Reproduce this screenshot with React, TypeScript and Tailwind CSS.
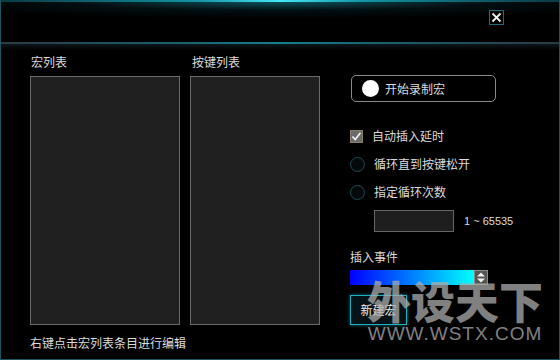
import React from "react";

const cjk = { fontFamily: '"Noto Sans CJK SC", "Noto Sans", sans-serif' };

function Radio() {
  return <div className="w-[15px] h-[15px] rounded-full border-[1.5px] border-[#1d4b56] bg-[#05090b] shrink-0" />;
}

export default function App() {
  return (
    <div
      className="relative w-[560px] h-[360px] bg-black border-x border-b border-[#1b5560] overflow-hidden text-[#dcdcdc] text-[12px]"
      style={cjk}
    >
      {/* header */}
      <div className="relative h-[42px] bg-[radial-gradient(ellipse_70%_45%_at_50%_0%,rgba(24,170,190,0.55),rgba(8,60,70,0.25)_55%,rgba(0,0,0,0)_100%)]">
        <div className="absolute left-0 right-0 top-0 h-[2px] bg-[linear-gradient(90deg,#0b3a44,#1592a3_35%,#45e6f5_50%,#1592a3_65%,#0b3a44)]" />
        <div className="flex justify-end pt-[10px] pr-[55px]">
          <div className="w-[15px] h-[15px] border border-[#1a6e7c] bg-black flex items-center justify-center">
            <svg width="11" height="11" viewBox="0 0 11 11">
              <path d="M1.5 1.5 L9.5 9.5 M9.5 1.5 L1.5 9.5" stroke="#f0f0f0" strokeWidth="1.8" />
            </svg>
          </div>
        </div>
      </div>
      <div className="h-[2px] bg-[linear-gradient(90deg,#2a3a42,#1a5f6a_30%,#13808c_50%,#1a5f6a_70%,#2a3a42)]" />
      <div className="h-[6px] bg-[linear-gradient(180deg,#0e171b,#000)]" />

      {/* body */}
      <div className="flex pl-[29px] -mt-[6px]">
        <div className="flex flex-col">
          <div className="flex gap-[10px]">
            <div className="flex flex-col w-[150px]">
              <div className="pt-[10px] leading-[16px] pl-[1px]">宏列表</div>
              <div className="mt-[6px] h-[249px] bg-[#202020] border border-[#6a6a6a]" />
            </div>
            <div className="flex flex-col w-[130px]">
              <div className="pt-[10px] leading-[16px] pl-[2px]">按键列表</div>
              <div className="mt-[6px] h-[249px] bg-[#202020] border border-[#6a6a6a]" />
            </div>
          </div>
          <div className="mt-[10px] leading-[16px]">右键点击宏列表条目进行编辑</div>
        </div>

        <div className="ml-[30px] flex flex-col">
          <div className="mt-[31px] ml-[1px] w-[145px] h-[27px] border border-[#8a8a8a] rounded-[5px] flex items-center pl-[10px]">
            <div className="w-[17px] h-[17px] rounded-full bg-white shrink-0" />
            <span className="ml-[6px] leading-[16px]">开始录制宏</span>
          </div>

          <div className="mt-[26px] h-[16px] flex items-center">
            <div className="w-[13px] h-[13px] bg-[#6a6a6a] border border-[#8c7e6c] flex items-center justify-center shrink-0">
              <svg width="11" height="11" viewBox="0 0 11 11">
                <path d="M1.5 5.5 L4.2 8.5 L9.5 1.8" stroke="#f4f4f4" strokeWidth="1.6" fill="none" />
              </svg>
            </div>
            <span className="ml-[9px]">自动插入延时</span>
          </div>

          <div className="mt-[12px] h-[16px] flex items-center">
            <Radio />
            <span className="ml-[9px]">循环直到按键松开</span>
          </div>

          <div className="mt-[12px] h-[16px] flex items-center">
            <Radio />
            <span className="ml-[9px]">指定循环次数</span>
          </div>

          <div className="mt-[10px] ml-[24px] flex items-center">
            <div className="w-[80px] h-[22px] bg-[#1e1e1e] border border-[#666]" />
            <span className="ml-[10px] text-[11px]" style={{ fontFamily: '"Liberation Sans", Arial, sans-serif' }}>
              1 ~ 65535
            </span>
          </div>

          <div className="mt-[17px] leading-[16px]">插入事件</div>

          <div className="mt-[5px] w-[138px] h-[15px] flex bg-[linear-gradient(90deg,#0000ff,#00ffff_90%)]">
            <div className="ml-auto w-[14px] h-[15px] bg-[#555] border border-[#8a8a8a] flex items-center justify-center">
              <svg width="10" height="11" viewBox="0 0 10 11">
                <path d="M5 0.5 L9 4.5 L1 4.5 Z M5 10.5 L9 6.5 L1 6.5 Z" fill="#f2f2f2" />
              </svg>
            </div>
          </div>

          <div className="mt-[10px] w-[57px] h-[30px] border border-[#1fb0c2] bg-[#061216] shadow-[0_0_4px_rgba(31,176,194,0.6)] flex items-center justify-center">
            <span className="leading-[16px] text-[#f0f0f0]">新建宏</span>
          </div>
        </div>
      </div>

      {/* watermark */}
      <div className="absolute left-[364px] top-[274px] w-[180px] flex flex-col items-center text-[#ababab] opacity-75 pointer-events-none">
        <div className="text-[44px] leading-[52px] font-black whitespace-nowrap">外设天下</div>
        <div
          className="text-[19px] leading-[20px] tracking-[1px] whitespace-nowrap -mt-[2px]"
          style={{ fontFamily: '"Liberation Sans", Arial, sans-serif' }}
        >
          WWW.WSTX.COM
        </div>
      </div>
    </div>
  );
}
